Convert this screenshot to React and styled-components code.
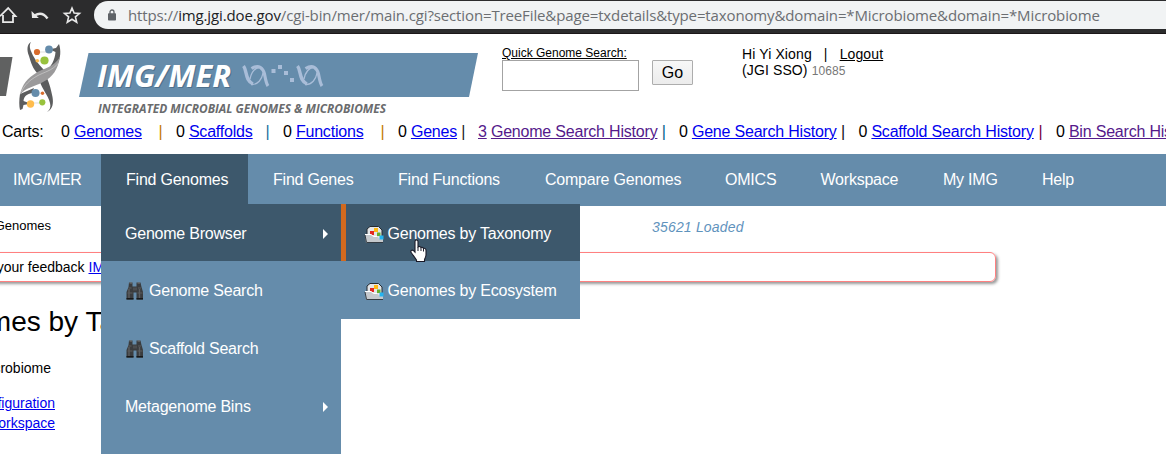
import React from 'react';
import styled, { createGlobalStyle } from 'styled-components';

const BLUE = '#658cab';
const DARK = '#3d586c';

const GlobalStyle = createGlobalStyle`
  * { box-sizing: border-box; }
  body {
    margin: 0;
    background: #fff;
    color: #000;
    font-family: "Liberation Sans", Arial, sans-serif;
    font-size: 14px;
    overflow: hidden;
  }
  svg { display: block; flex: none; }
`;

const Window = styled.div`
  width: 1166px;
  height: 454px;
  overflow: hidden;
`;

const BrowserBar = styled.div`
  display: flex;
  height: 34px;
  background: #2c2c2d;
  border-bottom: 1px solid #1b1719;
`;

const BrowserIcons = styled.div`
  width: 94px;
  height: 30px;
`;

const AddressBar = styled.div`
  flex: 1;
  height: 28px;
  margin-top: 1px;
  padding-left: 14px;
  border-radius: 14px 0 0 14px;
  background: #f1f3f4;
  display: flex;
  align-items: center;
  gap: 12px;
`;

const Url = styled.span`
  font-family: "Open Sans", "Noto Sans", sans-serif;
  font-size: 15px;
  line-height: 26px;
  letter-spacing: -0.13px;
  color: #6b6e72;
  white-space: nowrap;
`;

const Host = styled.span`
  color: #202124;
`;

const Header = styled.header`
  display: flex;
  height: 84px;
`;

const Search = styled.form`
  width: 240px;
  padding: 12px 0 0 22px;
`;

const SearchLabel = styled.label`
  display: block;
  font-size: 12px;
  line-height: 14px;
  text-decoration: underline;
`;

const SearchRow = styled.div`
  display: flex;
  align-items: flex-start;
  gap: 13px;
`;

const SearchInput = styled.input`
  width: 137px;
  height: 31px;
  border: 1px solid #a3a3a3;
  background: #fff;
  padding: 0;
`;

const GoButton = styled.button`
  width: 41px;
  height: 25px;
  padding: 0;
  border: 1px solid #adadad;
  border-radius: 1px;
  background: linear-gradient(#f7f7f7, #ececec);
  color: #000;
  font: 16px/22px "Liberation Sans", Arial, sans-serif;
`;

const User = styled.div`
  padding: 12px 0 0 22px;
  line-height: 16px;
  letter-spacing: 0.12px;
  white-space: pre;
`;

const Logout = styled.a`
  text-decoration: underline;
`;

const UserId = styled.span`
  font-size: 12px;
  color: #777;
`;

const Carts = styled.div`
  display: flex;
  height: 36px;
  padding: 4px 0 0 2px;
  font-size: 16px;
  line-height: 19px;
  letter-spacing: -0.2px;
  white-space: nowrap;
`;

const CartsTitle = styled.span`
  flex: none;
  width: 59px;
`;

const Cart = styled.span`
  flex: none;
  display: flex;
  gap: 4.2px;
  width: ${(p) => p.$width}px;
  padding-right: 13.5px;
`;

const CartLink = styled.a`
  color: ${(p) => (p.$visited ? '#551a8b' : '#0000ee')};
  text-decoration: underline;
`;

const Bar = styled.span`
  margin-left: auto;
  color: ${(p) => p.$color};
`;

const Nav = styled.nav`
  position: relative;
  display: flex;
  height: 52px;
  background: ${BLUE};
  color: #fff;
  font-size: 16px;
  letter-spacing: -0.22px;
`;

const NavItem = styled.div`
  flex: none;
  width: ${(p) => p.$width}px;
  padding-left: ${(p) => p.$pad ?? 25}px;
  height: 50px;
  line-height: 51px;
  background: ${(p) => (p.$active ? DARK : 'transparent')};
  white-space: nowrap;
`;

const Dropdown = styled.div`
  position: absolute;
  z-index: 2;
  left: 101px;
  top: 50px;
  width: 240px;
  height: 260px;
  background: ${BLUE};
`;

const Submenu = styled.div`
  position: absolute;
  left: 240px;
  top: 0;
  width: 239px;
  background: ${BLUE};
`;

const MenuItem = styled.div`
  display: flex;
  align-items: center;
  gap: 4px;
  height: ${(p) => (p.$active ? 57 : 58)}px;
  padding: ${(p) => (p.$active ? 2 : 1)}px 13px 0 24px;
  line-height: 20px;
  letter-spacing: -0.22px;
  white-space: nowrap;
  background: ${(p) => (p.$active ? DARK : BLUE)};
`;

const SubmenuItem = styled(MenuItem)`
  gap: 3.5px;
  padding-left: 18px;
  border-left: 5px solid ${(p) => (p.$active ? '#d2691e' : BLUE)};
`;

const Arrow = styled.i`
  margin-left: auto;
  border: 5px solid transparent;
  border-left: 5px solid #fff;
  border-right: 0;
`;

const Pointer = styled.svg`
  position: absolute;
  z-index: 3;
  left: 410px;
  top: 85px;
`;

const Content = styled.main`
  display: flex;
  flex-direction: column;
`;

const Status = styled.div`
  display: flex;
  height: 46px;
  padding-top: 12px;
  line-height: 16px;
  white-space: nowrap;
`;

/* Holds the tail of a line that is scrolled past the left edge. */
const Scrolled = styled.div`
  flex: none;
  display: flex;
  justify-content: flex-end;
  width: ${(p) => p.$end}px;
  font-size: ${(p) => p.$size ?? 14}px;
  line-height: 20px;
  white-space: pre;
`;

const Crumb = styled(Scrolled)`
  line-height: 16px;
`;

const Loaded = styled.span`
  margin-left: 601px;
  padding-top: 1px;
  font-style: italic;
  letter-spacing: 0.18px;
  color: #5f93bd;
`;

const Notice = styled.div`
  width: 1006px;
  height: 30px;
  margin-left: -10px;
  padding: 4px 0 0 10px;
  border: 1px solid #ff8080;
  border-radius: 6px;
  box-shadow: 2px 2px 3px #999;
`;

const Link = styled.a`
  color: #0000ee;
  text-decoration: underline;
`;

const Title = styled.h1`
  display: flex;
  justify-content: flex-end;
  flex: none;
  width: 213px;
  margin: 22px 0 18px;
  font-size: 28px;
  font-weight: 400;
  line-height: 36px;
  white-space: nowrap;
`;

const Links = styled.div`
  margin-top: 15px;
`;

const Toolbar = () => (
  <svg width="94" height="30" viewBox="0 0 94 30" fill="none" stroke="#e8e8e8">
    <path d="M0 16.2 8.2 8 15.5 16H13V22.2H3V15" strokeWidth="1.8" />
    <path d="M31.5 11 32 18H38.8Z" fill="#e8e8e8" stroke="none" />
    <path d="M34.5 15.6Q42 10.8 47.5 18.5" strokeWidth="2.4" />
    <path d="M72 8 74.1 13 79.5 13.4 75.4 16.9 76.7 22.2 72 19.3 67.3 22.2 68.6 16.9 64.5 13.4 69.9 13Z" strokeWidth="1.6" />
  </svg>
);

const Lock = () => (
  <svg width="8" height="12" viewBox="0 0 8 12">
    <path d="M2 5V3a2 2 0 0 1 4 0v2" fill="none" stroke="#5f6368" strokeWidth="1.3" />
    <rect y="4.3" width="8" height="7.2" rx="0.8" fill="#5f6368" />
  </svg>
);

const Helix = ({ x }) => (
  <g transform={`translate(${x} 65)`} fill="none" stroke="#a9bdd8">
    <path d="M1.500 1C5 5 3 16 11 19" strokeWidth="3.4" />
    <path d="M9.500 3.500C17 -1 21 3 22.500 9C23.500 14 24 18 26 21" strokeWidth="3.2" />
    <path d="M9 19.500C16 20 20 14 21 8M8 14C9 9 12 3 18 2" strokeWidth="1.3" />
  </g>
);

const Logo = () => (
  <svg width="480" height="84" viewBox="0 34 480 84">
    <path d="M0 57H12.5L6 96H0Z" fill="#606161" />
    <g fill="#5c5d5e">
      <path d="M31 42C27 44 26.500 50 29 56C31 63 33 69 38 74L44 70C38 64 33 57 30.500 50C29.500 47 29.500 44 31 42Z" />
      <path d="M40 82C42 89 48 95 50 103C51 107 50 110 47 112C53 109 53.500 103 52.500 97C51 90 50 85 47 78Z" />
      <path d="M59 44C61 50 61 58 57 65C53 69 50 71 45 72C51 67 55 60 55.500 52L51 50V49L56 48Z" />
      <path d="M20 94C19 100 19 106 20 110L22.500 109 23.500 105 29 104V103L23.500 101C24 96 27 94 32 93L34 88Z" />
    </g>
    <path d="M60 57C54 67 44 68 36 73C28 78 22 84 20 95C26 87 34 87 43 82C53 77 58 69 60 57Z" fill="#9b9a9b" />
    <path d="M58.500 63C52 71 44 72 37 76C30 80 24 85 21.500 92" fill="none" stroke="#d5d5d5" strokeWidth="0.6" />
    <path d="M37 52H49M38 61H44M36 93H42M31 103H42" stroke="#ddd" strokeWidth="1" />
    <circle cx="37" cy="52" r="3.1" fill="#d86c2d" />
    <circle cx="49" cy="49.5" r="3.9" fill="#658cab" />
    <circle cx="44.5" cy="60.5" r="4.1" fill="#98c23d" />
    <circle cx="37.3" cy="60.7" r="1.8" fill="#ffbc4d" />
    <circle cx="35.5" cy="93" r="4" fill="#658cab" />
    <circle cx="42.5" cy="93.3" r="1.7" fill="#d86c2d" />
    <circle cx="30.5" cy="104" r="3.7" fill="#ffbc4d" />
    <circle cx="42.3" cy="102.3" r="3.1" fill="#98c23d" />
    <path d="M88.5 53H478L469 97H79Z" fill="#658cab" />
    <text x="98" y="88" textLength="134" lengthAdjust="spacingAndGlyphs" fill="#4d6f8b" fontFamily="Open Sans, sans-serif" fontSize="31" fontWeight="700" fontStyle="italic">IMG/MER</text>
    <text x="97" y="87" textLength="134" lengthAdjust="spacingAndGlyphs" fill="#fff" fontFamily="Open Sans, sans-serif" fontSize="31" fontWeight="700" fontStyle="italic">IMG/MER</text>
    <Helix x={242} />
    <Helix x={296} />
    <path d="M271.500 69h4v4h-4zM278 65h4v4h-4zM284 71h4v4h-4zM290 78h4v4h-4z" fill="#a9bdd8" />
    <text x="98" y="113" textLength="288" lengthAdjust="spacingAndGlyphs" fill="#6a6b6d" fontFamily="Open Sans, sans-serif" fontSize="11.5" fontWeight="700" fontStyle="italic">INTEGRATED MICROBIAL GENOMES &amp; MICROBIOMES</text>
  </svg>
);

const Binoculars = () => (
  <svg width="20" height="20" viewBox="0 0 20 20">
    <path d="M4 1.500h3.500v4h4v-4H15.500l1 4.500 1.500 5v7.500h-6.500v-7h-3v7H1.500V11L3.500 6Z" fill="#3a3c3e" />
    <path d="M4.500 2h2.500M12.500 2h2.500" stroke="#777" strokeWidth="1" />
    <path d="M3.500 7h3M13 7h3M2.500 12h5M12.500 12h5" stroke="#666" strokeWidth="0.8" />
    <path d="M4 8v9M14.500 8v9" stroke="#5b5d5f" strokeWidth="1.4" />
    <path d="M1.500 17.800h7M11.500 17.800h6.500" stroke="#171819" strokeWidth="1.400" />
    <path d="M8 6.500h4v3H8z" fill="#4b4d4f" />
  </svg>
);

const Folder = () => (
  <svg width="20" height="20" viewBox="0 0 20 20">
    <path d="M3 9V5L6 2.500h8.500L18 6v12H3Z" fill="#e4e6e8" stroke="#242b31" />
    <path d="M6 7h4v4H6z" fill="#e32820" />
    <path d="M10 4h4v4h-4z" fill="#ffb915" />
    <path d="M13 8.500h3.500V12H13z" fill="#66b02a" />
    <path d="M1 10h6l2.500 2.500H13l2.500 2.500H19v4H2Z" fill="#c5c9cd" />
    <path d="M1 10.500h6l2.500 2h3.500" fill="none" stroke="#fff" />
    <path d="M15.500 11.500H19.500V15.500H15.500z" fill="#24b4f0" />
    <path d="M1 11l1.500 7.500H19" fill="none" stroke="#343c43" />
  </svg>
);

const Hand = () => (
  <Pointer width="18" height="26" viewBox="0 0 18 26">
    <path d="M5 2.500C5 .5 8 .5 8 2.500V8l1-.4c1-.3 1.800.2 2 .9 1.200-.5 2.200 0 2.400.9 1.500-.4 2.600.4 2.600 2.200V16c0 2-1.500 3.500-1.500 5v1.500H6.500V21C5 19 3 16 1.200 13.500c-1-1.800.8-3.200 2.300-1.800L5 13.200Z" fill="#fff" stroke="#1a1a28" strokeWidth="1.100" />
    <path d="M8 8v4M11 8.500V12M13.500 9.500V12.500" stroke="#1a1a28" strokeWidth="1" />
  </Pointer>
);

const carts = [
  { n: '0', name: 'Genomes', width: 115, bar: '#c47a00' },
  { n: '0', name: 'Scaffolds', width: 107, bar: '#216f9e' },
  { n: '0', name: 'Functions', width: 115, bar: '#c47a00' },
  { n: '0', name: 'Genes', width: 80, bar: '#222' },
  { n: '3', name: 'Genome Search History', width: 201, bar: '#00618a', visited: true },
  { n: '0', name: 'Gene Search History', width: 179.5, bar: '#111' },
  { n: '0', name: 'Scaffold Search History', width: 197.5, bar: '#760040' },
  { n: '0', name: 'Bin Search History', width: 180, bar: '#111', visited: true },
];

const nav = [
  { name: 'IMG/MER', width: 101, pad: 13 },
  { name: 'Find Genomes', width: 147, active: true },
  { name: 'Find Genes', width: 125 },
  { name: 'Find Functions', width: 147 },
  { name: 'Compare Genomes', width: 180 },
  { name: 'OMICS', width: 95.5 },
  { name: 'Workspace', width: 122.5 },
  { name: 'My IMG', width: 99 },
  { name: 'Help', width: 82 },
];

export default function App() {
  return (
    <Window>
      <GlobalStyle />
      <BrowserBar>
        <BrowserIcons><Toolbar /></BrowserIcons>
        <AddressBar>
          <Lock />
          <Url>https://<Host>img.jgi.doe.gov</Host>/cgi-bin/mer/main.cgi?section=TreeFile&amp;page=txdetails&amp;type=taxonomy&amp;domain=*Microbiome&amp;domain=*Microbiome</Url>
        </AddressBar>
      </BrowserBar>
      <Header>
        <Logo />
        <Search>
          <SearchLabel>Quick Genome Search:</SearchLabel>
          <SearchRow>
            <SearchInput />
            <GoButton type="button">Go</GoButton>
          </SearchRow>
        </Search>
        <User>
          <div>Hi Yi Xiong   |   <Logout>Logout</Logout></div>
          <div>(JGI SSO) <UserId>10685</UserId></div>
        </User>
      </Header>
      <Carts>
        <CartsTitle>Carts:</CartsTitle>
        {carts.map((c) => (
          <Cart key={c.name} $width={c.width}>
            {c.visited && c.n !== '0' ? <CartLink $visited>{c.n}</CartLink> : <span>{c.n}</span>}
            <CartLink $visited={c.visited}>{c.name}</CartLink>
            <Bar $color={c.bar}>|</Bar>
          </Cart>
        ))}
      </Carts>
      <Nav>
        {nav.map((n) => (
          <NavItem key={n.name} $width={n.width} $pad={n.pad} $active={n.active}>{n.name}</NavItem>
        ))}
        <Dropdown>
          <MenuItem $active>Genome Browser<Arrow /></MenuItem>
          <MenuItem><Binoculars />Genome Search</MenuItem>
          <MenuItem><Binoculars />Scaffold Search</MenuItem>
          <MenuItem>Metagenome Bins<Arrow /></MenuItem>
          <Submenu>
            <SubmenuItem $active><Folder />Genomes by Taxonomy</SubmenuItem>
            <SubmenuItem><Folder />Genomes by Ecosystem</SubmenuItem>
          </Submenu>
        </Dropdown>
        <Hand />
      </Nav>
      <Content>
        <Status>
          <Crumb $end={51} $size={13}>Genomes</Crumb>
          <Loaded>35621 Loaded</Loaded>
        </Status>
        <Notice>
          <Scrolled $end={129.5}>your feedback <Link>IMG/M</Link></Scrolled>
        </Notice>
        <Title>Genomes by Taxonomy</Title>
        <Scrolled $end={51}>Microbiome</Scrolled>
        <Links>
          <Scrolled $end={55}><Link>Configuration</Link></Scrolled>
          <Scrolled $end={55}><Link>Workspace</Link></Scrolled>
        </Links>
      </Content>
    </Window>
  );
}
